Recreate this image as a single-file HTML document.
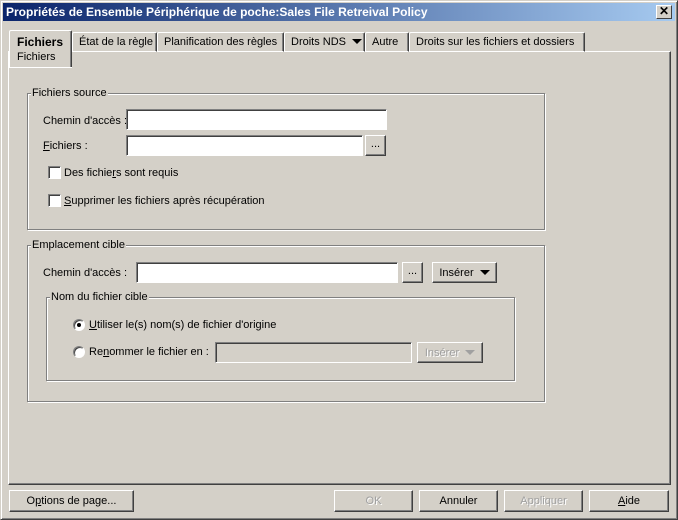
<!DOCTYPE html>
<html><head><meta charset="utf-8"><style>
*{box-sizing:border-box;margin:0;padding:0}
body{width:678px;height:520px;background:#d4d0c8;font-family:"Liberation Sans",sans-serif;font-size:11px;color:#000;position:relative;overflow:hidden}
.a{position:absolute}
.win{left:0;top:0;width:678px;height:520px;border:1px solid;border-color:#d4d0c8 #404040 #404040 #d4d0c8;box-shadow:inset 1px 1px #fff,inset -1px -1px #808080}
.title{left:3px;top:3px;width:672px;height:18px;background:linear-gradient(90deg,#0a246a,#a6caf0);color:#fff;font-weight:bold;font-size:12px;line-height:18px;padding-left:3px}
.x{width:16px;height:14px;background:#d4d0c8;border:1px solid;border-color:#fff #404040 #404040 #fff;color:#000;font-size:12px;line-height:11px;text-align:center;font-weight:bold}
.panel{left:8px;top:51px;width:663px;height:434px;border:1px solid;border-color:#fff #404040 #404040 #fff;box-shadow:inset -1px -1px #808080}
.tab{top:32px;height:20px;border:1px solid;border-color:#fff #404040 transparent #fff;border-radius:2px 2px 0 0;box-shadow:inset -1px 0 #808080;line-height:19px;padding-left:6px;white-space:nowrap}
.grp{border:1px solid #808080;box-shadow:1px 1px #fff,inset 1px 1px #fff}
.lg{background:#d4d0c8;padding:0 1px;line-height:12px}
.inp{background:#fff;border:1px solid;border-color:#808080 #fff #fff #808080;box-shadow:inset 1px 1px #404040}
.dis{background:#d4d0c8}
.btn{border:1px solid;border-color:#fff #404040 #404040 #fff;box-shadow:inset -1px -1px #808080;text-align:center;line-height:20px;white-space:nowrap}
.gray{color:#a0a0a0;text-shadow:1px 1px #fff}
.cb{width:13px;height:13px;background:#fff;border:1px solid;border-color:#808080 #fff #fff #808080;box-shadow:inset 1px 1px #404040}
.rd{width:12px;height:12px;border-radius:50%;background:#fff;border:1px solid;border-color:#808080 #fff #fff #808080;box-shadow:inset 1px 1px #404040}
.tri{display:inline-block;width:0;height:0;border-left:5px solid transparent;border-right:5px solid transparent;border-top:5px solid #000;vertical-align:1px;margin-left:6px}
u{text-decoration:underline}
</style></head><body>
<div class="a win"></div>
<div class="a title">Propriétés de Ensemble Périphérique de poche:Sales File Retreival Policy</div>
<div class="a x" style="left:656px;top:5px">✕</div>
<div class="a panel"></div>
<div class="a tab" style="left:72px;width:85px">État de la règle</div>
<div class="a tab" style="left:157px;width:127px">Planification des règles</div>
<div class="a tab" style="left:284px;width:81px">Droits NDS<span class="tri"></span></div>
<div class="a tab" style="left:365px;width:44px">Autre</div>
<div class="a tab" style="left:409px;width:176px">Droits sur les fichiers et dossiers</div>
<div class="a" style="left:9px;top:30px;width:63px;height:38px;background:#d4d0c8;border:1px solid;border-color:#fff #404040 #fff #fff;border-radius:2px 2px 0 0;box-shadow:inset -1px 0 #808080"></div>
<div class="a" style="left:17px;top:35px;font-weight:bold;font-size:12px">Fichiers</div>
<div class="a" style="left:17px;top:51px">Fichiers</div>
<div class="a" style="left:9px;top:67px;width:63px;height:1px;background:#fff"></div>

<div class="a grp" style="left:27px;top:93px;width:518px;height:137px"></div>
<div class="a lg" style="left:31px;top:87px">Fichiers source</div>
<div class="a" style="left:43px;top:115px">Chemin d'accès :</div>
<div class="a inp" style="left:126px;top:109px;width:261px;height:21px"></div>
<div class="a" style="left:43px;top:140px"><u>F</u>ichiers :</div>
<div class="a inp" style="left:126px;top:135px;width:237px;height:21px"></div>
<div class="a btn" style="left:365px;top:135px;width:21px;height:21px;line-height:17px">...</div>
<div class="a cb" style="left:48px;top:166px"></div>
<div class="a" style="left:64px;top:167px">Des fichie<u>r</u>s sont requis</div>
<div class="a cb" style="left:48px;top:194px"></div>
<div class="a" style="left:64px;top:195px"><u>S</u>upprimer les fichiers après récupération</div>

<div class="a grp" style="left:27px;top:245px;width:518px;height:157px"></div>
<div class="a lg" style="left:31px;top:239px">Emplacement cible</div>
<div class="a" style="left:43px;top:267px">Chemin d'accès :</div>
<div class="a inp" style="left:136px;top:262px;width:262px;height:21px"></div>
<div class="a btn" style="left:402px;top:262px;width:21px;height:21px;line-height:17px">...</div>
<div class="a btn" style="left:432px;top:262px;width:65px;height:21px">Insérer<span class="tri"></span></div>
<div class="a grp" style="left:46px;top:297px;width:469px;height:84px"></div>
<div class="a lg" style="left:50px;top:291px">Nom du fichier cible</div>
<div class="a rd" style="left:73px;top:319px"></div>
<div class="a" style="left:77px;top:323px;width:4px;height:4px;background:#000;border-radius:50%"></div>
<div class="a" style="left:89px;top:319px"><u>U</u>tiliser le(s) nom(s) de fichier d'origine</div>
<div class="a rd" style="left:73px;top:346px"></div>
<div class="a" style="left:89px;top:346px">Re<u>n</u>ommer le fichier en :</div>
<div class="a inp dis" style="left:215px;top:342px;width:197px;height:21px"></div>
<div class="a btn gray" style="left:417px;top:342px;width:66px;height:21px">Insérer<span class="tri" style="border-top-color:#a0a0a0"></span></div>

<div class="a btn" style="left:9px;top:490px;width:125px;height:22px">O<u>p</u>tions de page...</div>
<div class="a btn gray" style="left:334px;top:490px;width:79px;height:22px">OK</div>
<div class="a btn" style="left:419px;top:490px;width:79px;height:22px">Annuler</div>
<div class="a btn gray" style="left:504px;top:490px;width:79px;height:22px">Appliquer</div>
<div class="a btn" style="left:589px;top:490px;width:80px;height:22px"><u>A</u>ide</div>
</body></html>
